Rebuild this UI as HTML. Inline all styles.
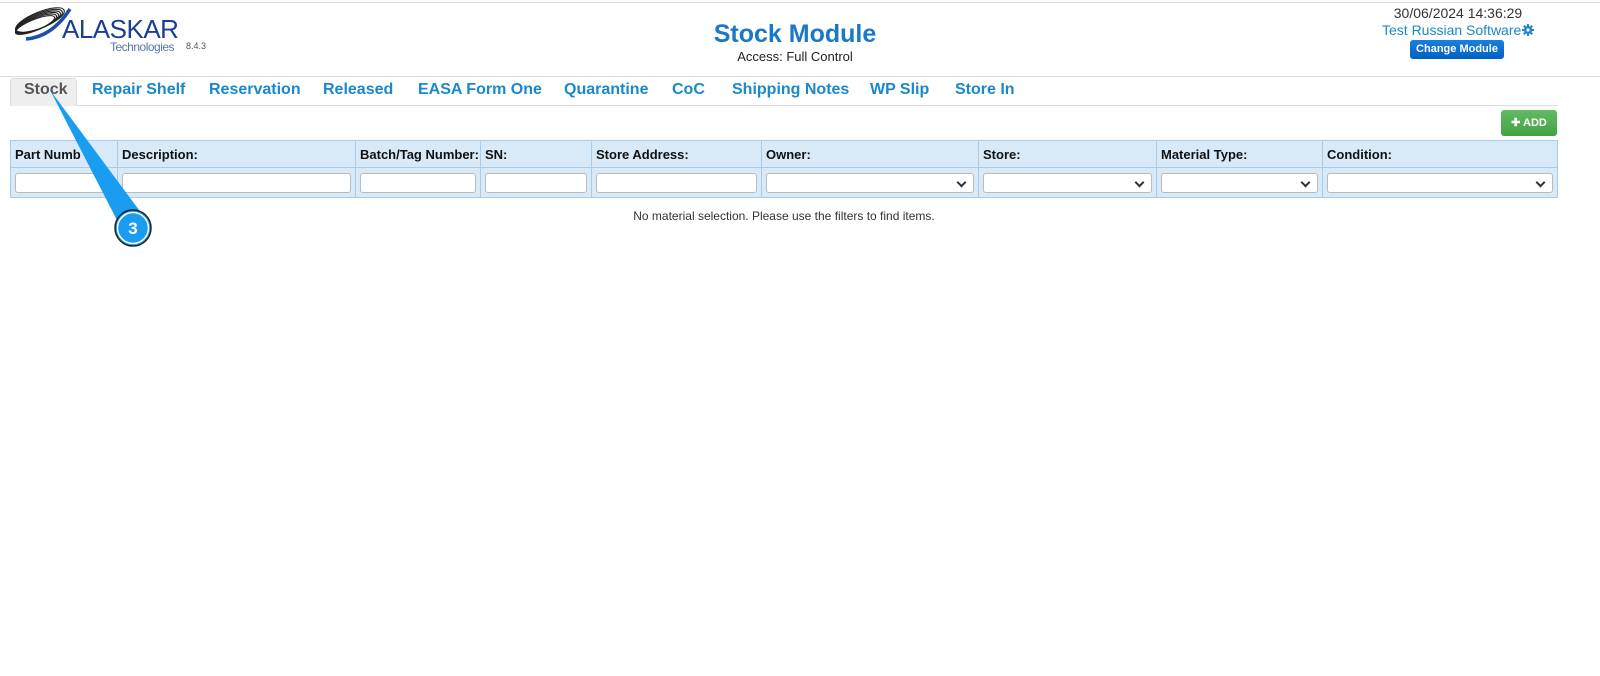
<!DOCTYPE html>
<html><head><meta charset="utf-8"><style>
*{box-sizing:border-box;margin:0;padding:0}
body{width:1600px;height:676px;background:#fff;font-family:"Liberation Sans",sans-serif;position:relative;overflow:hidden;color:#222}
.abs{position:absolute}
.tab{position:absolute;top:81px;font-size:16px;font-weight:bold;color:#1a88cc}
th,td{border:1px solid #a9cde8}
table{position:absolute;left:10px;top:140px;width:1548px;border-collapse:collapse;background:#d8eaf8}
th{height:27px;text-align:left;font-size:13px;padding-left:4px;font-weight:bold;color:#111}
td{height:30px;padding:0 4px}
.in{height:20px;border:1px solid #bbb;border-radius:3px;background:#fff;width:100%;position:relative}
.sel::after{content:"";position:absolute;right:8px;top:5px;width:5px;height:5px;border-right:2px solid #333;border-bottom:2px solid #333;transform:rotate(45deg)}
</style></head><body>
<div class="abs" style="left:0;top:2px;width:1600px;border-top:1px solid #ddd"></div>
<svg class="abs" style="left:12px;top:5px" width="60" height="38" viewBox="0 0 60 38">
<g fill="none" stroke="#222" stroke-width="1.1">
<ellipse cx="28" cy="15" rx="26" ry="8" transform="rotate(-22 28 15)"/>
<ellipse cx="27" cy="16" rx="25" ry="7.5" transform="rotate(-22 27 16)"/>
<ellipse cx="26" cy="17" rx="24" ry="7" transform="rotate(-22 26 17)"/>
<ellipse cx="25" cy="18" rx="23" ry="6.5" transform="rotate(-22 25 18)"/>
<ellipse cx="24" cy="19" rx="22" ry="6" transform="rotate(-22 24 19)"/>
<ellipse cx="23" cy="20" rx="21" ry="5.5" transform="rotate(-22 23 20)"/>
</g>
<path d="M14 34 Q40 32 58 4" stroke="#1b4fa8" stroke-width="3.5" fill="none"/>
</svg>
<div class="abs" style="left:62px;top:14px;font-size:26px;color:#1b3f8f;letter-spacing:-0.5px">ALASKAR</div>
<div class="abs" style="left:110px;top:40px;font-size:12px;color:#5a78a8;letter-spacing:-0.5px">Technologies</div>
<div class="abs" style="left:186px;top:41px;font-size:9px;color:#555">8.4.3</div>
<div class="abs" style="left:0;width:1590px;top:20px;text-align:center;font-size:25px;font-weight:bold;color:#1a78c8">Stock Module</div>
<div class="abs" style="left:0;width:1590px;top:49px;text-align:center;font-size:13px;color:#222">Access: Full Control</div>
<div class="abs" style="left:1358px;width:200px;top:5px;text-align:center;font-size:14px;color:#333">30/06/2024 14:36:29</div>
<div class="abs" style="left:1382px;top:22px;font-size:14px;color:#1a88cc">Test Russian Software</div>
<svg class="abs" style="left:1522px;top:24px" width="12" height="12" viewBox="0 0 12 12"><g fill="#1a88cc"><circle cx="6" cy="6" r="4"/><rect x="5" y="0" width="2" height="12"/><rect x="0" y="5" width="12" height="2"/><rect x="5" y="0" width="2" height="12" transform="rotate(45 6 6)"/><rect x="5" y="0" width="2" height="12" transform="rotate(-45 6 6)"/></g><circle cx="6" cy="6" r="1.6" fill="#fff"/></svg>
<div class="abs" style="left:1410px;top:40px;width:94px;height:19px;background:linear-gradient(#1a80e0,#0060c0);border-radius:3px;color:#fff;font-size:11px;font-weight:bold;text-align:center;line-height:19px">Change Module</div>
<div class="abs" style="left:0;top:76px;width:1600px;border-top:1px solid #ddd"></div>
<div class="abs" style="left:10px;top:105px;width:1548px;border-top:1px solid #ddd"></div>
<div class="abs" style="left:10px;top:78px;width:67px;height:28px;background:#eee;border:1px solid #ddd;border-bottom:none;border-radius:3px 3px 0 0"></div>
<div class="tab" style="left:24px;color:#555">Stock</div>
<div class="tab" style="left:92px">Repair Shelf</div>
<div class="tab" style="left:209px">Reservation</div>
<div class="tab" style="left:323px">Released</div>
<div class="tab" style="left:418px">EASA Form One</div>
<div class="tab" style="left:564px">Quarantine</div>
<div class="tab" style="left:672px">CoC</div>
<div class="tab" style="left:732px">Shipping Notes</div>
<div class="tab" style="left:870px">WP Slip</div>
<div class="tab" style="left:955px">Store In</div>
<div class="abs" style="left:1501px;top:110px;width:56px;height:26px;background:linear-gradient(#62bb62,#45a045);border-radius:3px;color:#fff;font-size:11px;font-weight:bold;text-align:center;line-height:26px">✚ ADD</div>
<table><tr>
<th style="width:107px">Part Numb</th><th style="width:238px">Description:</th><th style="width:125px">Batch/Tag Number:</th><th style="width:111px">SN:</th><th style="width:170px">Store Address:</th><th style="width:217px">Owner:</th><th style="width:178px">Store:</th><th style="width:166px">Material Type:</th><th>Condition:</th></tr>
<tr><td><div class="in"></div></td><td><div class="in"></div></td><td><div class="in"></div></td><td><div class="in"></div></td><td><div class="in"></div></td><td><div class="in sel"></div></td><td><div class="in sel"></div></td><td><div class="in sel"></div></td><td><div class="in sel"></div></td></tr></table>
<div class="abs" style="left:0;width:1568px;top:209px;text-align:center;font-size:12px;color:#333">No material selection. Please use the filters to find items.</div>
<svg class="abs" style="left:0;top:0" width="200" height="260">
<path d="M50 90 L142 214 L120 226 Z" fill="#1a9cf0"/>
<circle cx="133" cy="228" r="18" fill="#1a9cf0" stroke="#222" stroke-width="1.5"/>
<circle cx="133" cy="228" r="15.5" fill="none" stroke="#fff" stroke-width="1.5"/>
<text x="133" y="234" text-anchor="middle" font-family="Liberation Sans" font-weight="bold" font-size="17" fill="#fff">3</text>
</svg>
</body></html>
